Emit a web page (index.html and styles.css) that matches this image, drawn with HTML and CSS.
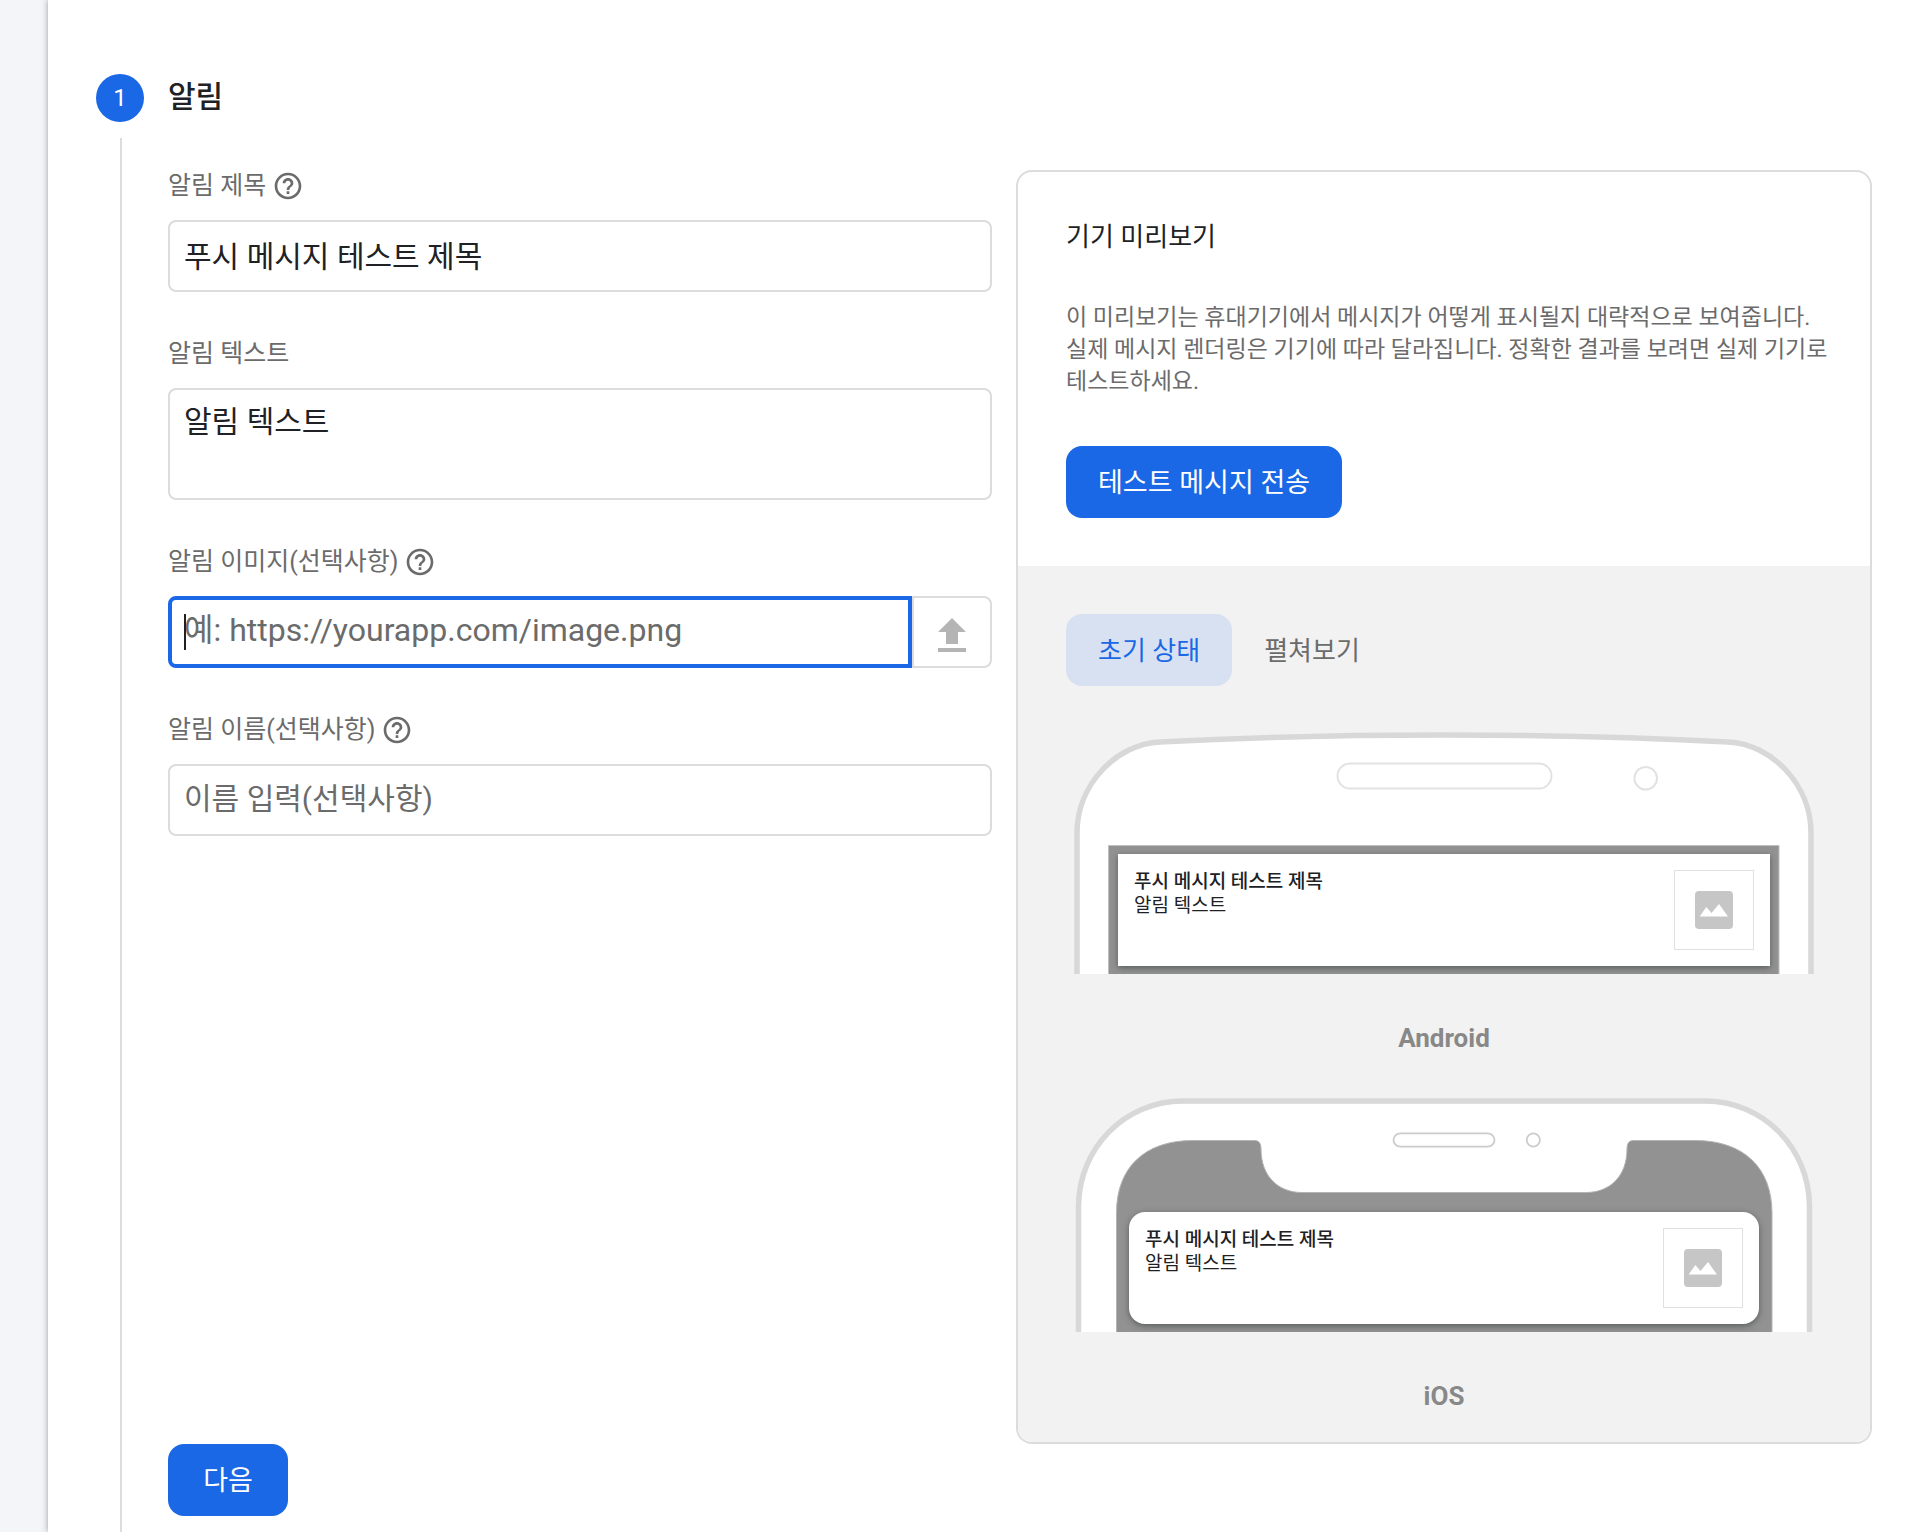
FILE: index.html
```html
<!DOCTYPE html>
<html lang="ko">
<head>
  <meta charset="UTF-8">
  <meta name="viewport" content="width=device-width, initial-scale=1.0">
  <title>알림 작성</title>
  <link rel="stylesheet" href="styles.css">
</head>
<body>
  <svg class="sprite" aria-hidden="true">
    <symbol id="icon-help" viewBox="0 0 24 24">
      <path d="M11 18h2v-2h-2v2zm1-16C6.48 2 2 6.48 2 12s4.480 10 10 10 10-4.480 10-10S17.520 2 12 2zm0 18c-4.410 0-8-3.590-8-8s3.590-8 8-8 8 3.590 8 8-3.590 8-8 8zm0-14c-2.210 0-4 1.790-4 4h2c0-1.100.9-2 2-2s2 .9 2 2c0 2-3 1.750-3 5h2c0-2.250 3-2.500 3-5 0-2.210-1.790-4-4-4z"/>
    </symbol>
    <symbol id="icon-image" viewBox="0 0 38 38">
      <rect width="38" height="38" rx="4" fill="#c6c6c6"/>
      <path d="M4.700 25.500L11.300 16l5.200 6L24 13l9 12.500z" fill="#fff"/>
    </symbol>
  </svg>

  <main class="sheet">
    <section class="step">
      <span class="step-number">1</span>
      <h2 class="step-title">알림</h2>
      <div class="step-line"></div>

      <div class="step-content">
        <div class="columns">
          <form class="fields">
            <div class="field">
              <div class="field-label">
                <label for="title">알림 제목</label>
                <svg class="help"><use href="#icon-help"/></svg>
              </div>
              <input class="text-input" id="title" type="text" value="푸시 메시지 테스트 제목">
            </div>

            <div class="field">
              <div class="field-label">
                <label for="text">알림 텍스트</label>
              </div>
              <textarea class="text-input text-area" id="text">알림 텍스트</textarea>
            </div>

            <div class="field">
              <div class="field-label">
                <label for="image">알림 이미지(선택사항)</label>
                <svg class="help"><use href="#icon-help"/></svg>
              </div>
              <div class="image-row">
                <input class="text-input active" id="image" type="text" placeholder="예: https://yourapp.com/image.png">
                <span class="caret"></span>
                <button class="upload" type="button" aria-label="이미지 업로드">
                  <svg viewBox="0 0 24 24"><path d="M9 16h6v-6h4l-7-7-7 7h4zm-4 2h14v2H5z"/></svg>
                </button>
              </div>
            </div>

            <div class="field">
              <div class="field-label">
                <label for="name">알림 이름(선택사항)</label>
                <svg class="help"><use href="#icon-help"/></svg>
              </div>
              <input class="text-input" id="name" type="text" placeholder="이름 입력(선택사항)">
            </div>
          </form>

          <aside class="preview">
            <div class="preview-info">
              <h3 class="preview-title">기기 미리보기</h3>
              <p class="preview-text">이 미리보기는 휴대기기에서 메시지가 어떻게 표시될지 대략적으로 보여줍니다. 실제 메시지 렌더링은 기기에 따라 달라집니다. 정확한 결과를 보려면 실제 기기로 테스트하세요.</p>
              <button class="primary" type="button">테스트 메시지 전송</button>
            </div>

            <div class="devices">
              <div class="tabs">
                <button class="tab selected" type="button">초기 상태</button>
                <button class="tab" type="button">펼쳐보기</button>
              </div>

              <figure class="device">
                <div class="phone">
                  <svg class="frame" viewBox="0 0 740 242" width="740" height="242">
                    <path d="M3 250V101C3 53 42 12 86 10C180 5 280 3 370 3S560 5 654 10C698 12 737 53 737 101V250" fill="#fff" stroke="#d8d8d8" stroke-width="5.500"/>
                    <rect x="263.500" y="31.500" width="214" height="25" rx="12.500" fill="#fff" stroke="#e2e2e2" stroke-width="2"/>
                    <circle cx="571.700" cy="46.300" r="11.300" fill="#fff" stroke="#e2e2e2" stroke-width="2"/>
                    <path d="M34.500 250V113.500H705V250" fill="#929292" stroke="#c0c0c0"/>
                  </svg>
                  <div class="notice">
                    <div class="notice-text">
                      <strong>푸시 메시지 테스트 제목</strong>
                      <span>알림 텍스트</span>
                    </div>
                    <div class="thumb"><svg><use href="#icon-image"/></svg></div>
                  </div>
                </div>
                <figcaption>Android</figcaption>
              </figure>

              <figure class="device">
                <div class="phone">
                  <svg class="frame" viewBox="0 0 740 234" width="740" height="234">
                    <path d="M4.500 240V109C4.500 50 51 3 109 3H631C689 3 735.500 50 735.500 109V240" fill="#fff" stroke="#d8d8d8" stroke-width="5.500"/>
                    <rect x="319.500" y="35.300" width="101" height="13.400" rx="6.700" fill="#fff" stroke="#ccc" stroke-width="1.800"/>
                    <circle cx="459.300" cy="42" r="6.600" fill="#fff" stroke="#ccc" stroke-width="1.800"/>
                    <path d="M42.500 240V115C42.500 70 70 42.500 119 42.500H180C185 42.500 187 45 187 51C187 78 204 94.500 228 94.500H512C536 94.500 553 78 553 51C553 45 555 42.500 560 42.500H621C670 42.500 698 70 698 115V240" fill="#929292" stroke="#b4b4b4"/>
                  </svg>
                  <div class="notice rounded">
                    <div class="notice-text">
                      <strong>푸시 메시지 테스트 제목</strong>
                      <span>알림 텍스트</span>
                    </div>
                    <div class="thumb"><svg><use href="#icon-image"/></svg></div>
                  </div>
                </div>
                <figcaption>iOS</figcaption>
              </figure>
            </div>
          </aside>
        </div>

        <button class="primary next" type="button">다음</button>
      </div>
    </section>
  </main>
</body>
</html>
```

FILE: styles.css
```css
* {
  box-sizing: border-box;
}

body {
  margin: 0;
  background-color: #f4f5f8;
  color: #202124;
  font-family: Roboto, "Noto Sans CJK KR", sans-serif;
}

h2, h3, p, figure {
  margin: 0;
}

button, input, textarea {
  font-family: inherit;
  margin: 0;
}

button {
  cursor: pointer;
}

.sprite {
  display: none;
}

.sheet {
  display: flex;
  min-height: 100vh;
  margin-left: 48px;
  padding: 74px 42px 0 48px;
  background-color: #fff;
  box-shadow: 0 0 6px rgba(60, 64, 67, 0.5);
}

/* Step header, line and content */
.step {
  flex: 1;
  display: grid;
  grid-template-columns: 48px minmax(0, 1fr);
  grid-template-rows: 48px 1fr;
  column-gap: 24px;
}

.step-number {
  display: flex;
  align-items: center;
  justify-content: center;
  border-radius: 50%;
  background-color: #1a68e5;
  color: #fff;
  font-size: 24px;
}

.step-title {
  font-size: 30px;
  font-weight: 500;
  line-height: 46px;
}

.step-line {
  width: 2px;
  margin: 16px 0 0 24px;
  background-color: #dcdcdc;
}

.step-content {
  padding: 48px 0 16px;
}

.columns {
  display: grid;
  grid-template-columns: minmax(0, 1fr) 856px;
  gap: 24px;
}

/* Form */
.fields {
  display: flex;
  flex-direction: column;
  gap: 46px;
}

.field-label {
  display: flex;
  align-items: center;
  gap: 6px;
  height: 32px;
  margin-bottom: 18px;
  color: #6b6b6b;
  font-size: 25px;
  line-height: 32px;
}

.help {
  width: 32px;
  height: 32px;
  fill: #6b6b6b;
}

.text-input {
  display: block;
  width: 100%;
  height: 72px;
  padding: 0 14px 4px;
  border: 2px solid #dcdcdc;
  border-radius: 8px;
  outline: none;
  background-color: #fff;
  color: #202124;
  font-size: 30px;
  line-height: 36px;
}

.text-input::placeholder {
  color: #6b6b6b;
  opacity: 1;
}

.text-area {
  height: 112px;
  padding-top: 14px;
  resize: none;
}

.image-row {
  position: relative;
  display: flex;
}

.text-input.active {
  flex: 1;
  padding: 0 12px 4px;
  border: 4px solid #1a68e5;
  border-radius: 8px 0 0 8px;
  font-size: 32px;
}

.caret {
  position: absolute;
  top: 18px;
  left: 16px;
  width: 2px;
  height: 36px;
  background-color: #202124;
}

.upload {
  width: 80px;
  padding: 8px 0 0;
  border: 2px solid #dcdcdc;
  border-radius: 0 8px 8px 0;
  background-color: #fff;
}

.upload svg {
  display: block;
  width: 48px;
  height: 48px;
  margin: 0 auto;
  fill: #b4b4b4;
}

.primary {
  height: 72px;
  padding: 0 32px 4px;
  border: none;
  border-radius: 16px;
  background-color: #1a68e5;
  color: #fff;
  font-size: 27px;
}

.next {
  display: block;
  min-width: 120px;
}

/* Preview card */
.preview {
  overflow: hidden;
  border: 2px solid #dcdcdc;
  border-radius: 16px;
}

.preview-info {
  display: flex;
  flex-direction: column;
  align-items: flex-start;
  gap: 48px;
  padding: 48px 32px 48px 48px;
}

.preview-title {
  font-size: 26px;
  font-weight: 400;
  line-height: 34px;
}

.preview-text {
  color: #6b6b6b;
  font-size: 23px;
  line-height: 32px;
  word-break: keep-all;
}

.devices {
  padding: 48px 48px 30px;
  background-color: #f2f2f2;
}

.tabs {
  display: flex;
  margin-bottom: 46px;
}

.tab {
  height: 72px;
  padding: 0 32px 4px;
  border: none;
  border-radius: 16px;
  background: none;
  color: #6b6b6b;
  font-size: 26px;
}

.tab.selected {
  background-color: #d8e1f2;
  color: #1a68e5;
}

.device + .device {
  margin-top: 44px;
}

/* The notice sits over the lower part of the phone frame */
.phone {
  display: grid;
  justify-items: center;
  overflow: hidden;
}

.frame {
  grid-area: 1 / 1;
  display: block;
}

.notice {
  grid-area: 1 / 1;
  align-self: end;
  display: flex;
  justify-content: space-between;
  width: 652px;
  height: 112px;
  margin-bottom: 8px;
  padding: 16px;
  background-color: #fff;
  box-shadow: 0 2px 6px rgba(32, 44, 38, 0.5);
}

.notice.rounded {
  width: 630px;
  border-radius: 16px;
}

.notice-text {
  display: flex;
  flex-direction: column;
  font-size: 19px;
  line-height: 24px;
}

.notice-text strong {
  font-weight: 500;
}

.thumb {
  display: flex;
  align-items: center;
  justify-content: center;
  width: 80px;
  height: 80px;
  border: 1px solid #e0e0e0;
}

.thumb svg {
  width: 38px;
  height: 38px;
}

figcaption {
  margin-top: 48px;
  color: #888;
  font-size: 26px;
  font-weight: 700;
  line-height: 32px;
  text-align: center;
}
```
